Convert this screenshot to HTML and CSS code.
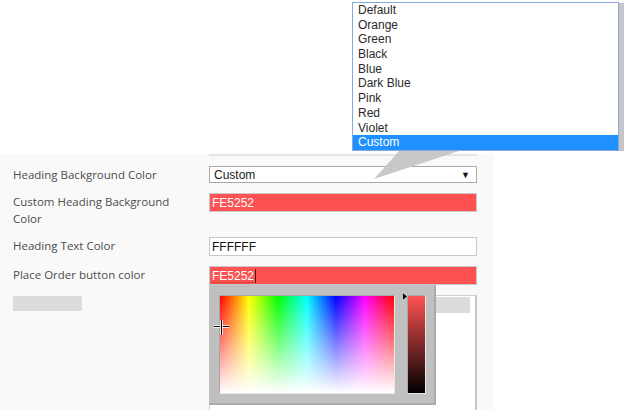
FILE: index.html
```html
<!DOCTYPE html>
<html>
<head>
<meta charset="utf-8">
<link rel="stylesheet" href="styles.css">
</head>
<body>
<div class="page">
  <div class="top-space"></div>
  <div class="panel">
    <div class="sep"></div>
    <div class="form">
      <div class="lbl">Heading Background Color</div>
      <div class="select"><span>Custom</span><span class="arrow">▼</span></div>
      <div class="lbl">Custom Heading Background Color</div>
      <div class="input red">FE5252</div>
      <div class="lbl">Heading Text Color</div>
      <div class="input">FFFFFF</div>
      <div class="lbl">Place Order button color</div>
      <div class="input red"><span class="spell">FE5252</span><span class="caret"></span></div>
      <div class="lbl"><div class="ghost"></div></div>
      <div class="editor"><div class="toolbar"></div></div>
    </div>
  </div>

  <svg class="callout" width="624" height="185" viewBox="0 0 624 185">
    <rect x="360" y="3" width="264" height="148" fill="#c6c6c6"/>
    <polygon points="400,150 462,150 374,179" fill="#c8c8c8"/>
  </svg>

  <ul class="dropdown">
    <li>Default</li>
    <li>Orange</li>
    <li>Green</li>
    <li>Black</li>
    <li>Blue</li>
    <li>Dark Blue</li>
    <li>Pink</li>
    <li>Red</li>
    <li>Violet</li>
    <li class="sel">Custom</li>
  </ul>

  <div class="picker">
    <div class="sv">
      <div class="sv-white"></div>
    </div>
    <div class="hue-col">
      <div class="hue"></div>
    </div>
    <svg class="marker" width="6" height="9" viewBox="0 0 6 9"><polygon points="0.5,0.5 5.5,4.5 0.5,8.5" fill="#000" stroke="#fff" stroke-width="0.6"/></svg>
    <div class="cross"><span class="ch"></span><span class="cv"></span></div>
  </div>
</div>
</body>
</html>
```

FILE: styles.css
```css
html, body {
  margin: 0;
  padding: 0;
  background: #fff;
}
body {
  width: 624px;
  height: 410px;
  overflow: hidden;
  font-family: "Liberation Sans", Arial, sans-serif;
}
.page {
  position: relative;
  width: 624px;
  height: 410px;
}
.top-space {
  height: 154px;
}
.panel {
  width: 493px;
  height: 256px;
  background: #f9f9f9;
  overflow: hidden;
}
.sep {
  margin-left: 209px;
  width: 268px;
  height: 2px;
  background: #e4e4e4;
}
.form {
  display: grid;
  grid-template-columns: 196px 268px;
  row-gap: 10px;
  padding: 10px 0 0 13px;
}
.lbl {
  font-family: "Open Sans", sans-serif;
  font-size: 11.5px;
  line-height: 17px;
  color: #4d4d4d;
  width: 168px;
}
.select {
  box-sizing: border-box;
  height: 17px;
  margin-bottom: -1px;
  background: #fff;
  border: 1px solid #a9a9a9;
  display: flex;
  align-items: center;
  justify-content: space-between;
  padding: 0 6px 0 4px;
  font-size: 12px;
  color: #222;
}
.arrow {
  font-size: 9px;
  color: #111;
}
.input {
  box-sizing: border-box;
  height: 19px;
  background: #fff;
  border: 1px solid #c8c8c8;
  display: flex;
  align-items: center;
  padding: 0 2px;
  font-size: 12px;
  color: #111;
}
.input.red {
  background: #fe5252;
  color: #fff;
  border-color: #c9c9c9;
}
.spell {
  text-decoration: underline dotted #c0392b;
  text-underline-offset: 2px;
}
.caret {
  width: 1px;
  height: 14px;
  background: #222;
  margin-left: 1px;
}
.ghost {
  width: 69px;
  height: 15px;
  margin-top: 1px;
  background: #dcdcdc;
}
.editor {
  box-sizing: border-box;
  height: 130px;
  background: #fff;
  border: 1px solid #cfcfcf;
  border-right: 2px solid #c4c4c4;
  padding: 1px 5px 0 1px;
}
.toolbar {
  height: 16px;
  background: #dcdcdc;
}
.callout {
  position: absolute;
  left: 0;
  top: 0;
  z-index: 5;
}
.dropdown {
  position: absolute;
  left: 352px;
  top: 2px;
  width: 265px;
  margin: 0;
  padding: 0;
  list-style: none;
  background: #fff;
  border: 1px solid #86a9df;
  z-index: 6;
}
.dropdown li {
  height: 14.7px;
  line-height: 14.7px;
  padding-left: 5px;
  font-size: 12px;
  color: #2a2a2a;
}
.dropdown li.sel {
  background: #1e90ff;
  color: #fff;
}
.picker {
  position: absolute;
  left: 209px;
  top: 285px;
  box-sizing: border-box;
  width: 227px;
  height: 120px;
  background: #c0c0c0;
  border-right: 2px solid #ababab;
  border-bottom: 2px solid #ababab;
  z-index: 4;
}
.sv {
  position: absolute;
  left: 10px;
  top: 10px;
  box-sizing: border-box;
  width: 176px;
  height: 99px;
  border: 1px solid;
  border-color: #a5a5a5 #e8e8e8 #e8e8e8 #a5a5a5;
  background: linear-gradient(to right, #ff0000 0%, #ffff00 16.67%, #00ff00 33.33%, #00ffff 50%, #0000ff 66.67%, #ff00ff 83.33%, #ff0000 100%);
}
.sv-white {
  width: 100%;
  height: 100%;
  background: linear-gradient(to bottom, rgba(255,255,255,0) 0%, rgba(255,255,255,1) 100%);
}
.hue-col {
  position: absolute;
  left: 198px;
  top: 10px;
  box-sizing: border-box;
  width: 19px;
  height: 99px;
  border: 1px solid;
  border-color: #a5a5a5 #e8e8e8 #e8e8e8 #a5a5a5;
}
.hue {
  width: 100%;
  height: 100%;
  background: linear-gradient(to bottom, #fe5252 0%, #000000 100%);
}
.marker {
  position: absolute;
  left: 193px;
  top: 7px;
  display: block;
}
.cross {
  position: absolute;
  left: 5px;
  top: 35px;
  width: 15px;
  height: 15px;
}
.ch {
  position: absolute;
  left: 0;
  top: 6px;
  width: 15px;
  height: 1px;
  background: #000;
  box-shadow: 0 1px 0 rgba(255,255,255,0.8), 0 -1px 0 rgba(255,255,255,0.8);
}
.cv {
  position: absolute;
  left: 7px;
  top: 0;
  width: 1px;
  height: 15px;
  background: #000;
  box-shadow: 1px 0 0 rgba(255,255,255,0.8), -1px 0 0 rgba(255,255,255,0.8);
}
```
